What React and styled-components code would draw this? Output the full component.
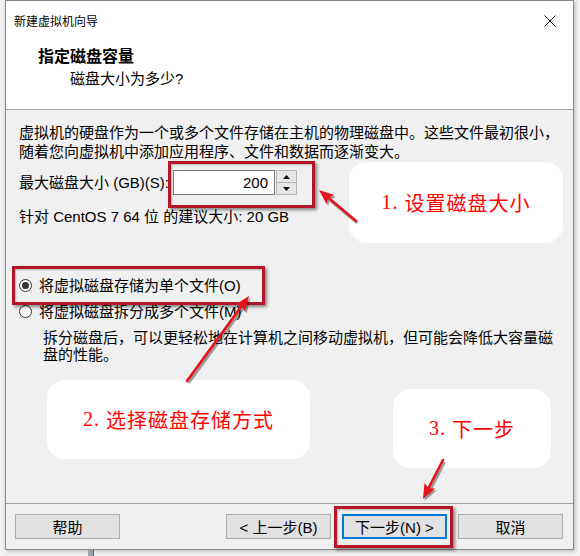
import React from 'react';
import styled, { createGlobalStyle } from 'styled-components';

const GlobalStyle = createGlobalStyle`
  html, body {
    margin: 0;
    padding: 0;
    background: #f2f2f2;
  }
`;

const UI_FONT = `"Liberation Sans", "Noto Sans CJK SC", sans-serif`;

export default function App() {
  return (
    <>
      <GlobalStyle />
      <Page>
        <Dialog>
          <TitleBar>
            <Title>新建虚拟机向导</Title>
            <CloseButton>
              <svg width="12" height="12" viewBox="0 0 12 12">
                <path d="M0.5 0.5 L11.5 11.5 M11.5 0.5 L0.5 11.5" stroke="#111" strokeWidth="1" fill="none" />
              </svg>
            </CloseButton>
          </TitleBar>

          <Header>
            <HeaderTitle>指定磁盘容量</HeaderTitle>
            <HeaderSub>磁盘大小为多少?</HeaderSub>
          </Header>

          <Body>
            <Paragraph>
              虚拟机的硬盘作为一个或多个文件存储在主机的物理磁盘中。这些文件最初很小，
              <br />
              随着您向虚拟机中添加应用程序、文件和数据而逐渐变大。
            </Paragraph>

            <SizeRow>
              <Label>最大磁盘大小 (GB)(S):</Label>
              <NumberBox>200</NumberBox>
              <Spinner>
                <SpinButton>
                  <svg width="7" height="4" viewBox="0 0 7 4"><path d="M3.5 0 L7 4 L0 4 Z" fill="#111" /></svg>
                </SpinButton>
                <SpinButton>
                  <svg width="7" height="4" viewBox="0 0 7 4"><path d="M0 0 L7 0 L3.5 4 Z" fill="#111" /></svg>
                </SpinButton>
              </Spinner>
            </SizeRow>

            <Hint>针对 CentOS 7 64 位 的建议大小: 20 GB</Hint>

            <RadioGroup>
              <RadioRow>
                <Radio $checked />
                <span>将虚拟磁盘存储为单个文件(O)</span>
              </RadioRow>
              <RadioRow>
                <Radio />
                <span>将虚拟磁盘拆分成多个文件(M)</span>
              </RadioRow>
              <RadioNote>
                拆分磁盘后，可以更轻松地在计算机之间移动虚拟机，但可能会降低大容量磁
                <br />
                盘的性能。
              </RadioNote>
            </RadioGroup>
          </Body>

          <Footer>
            <Button>帮助</Button>
            <FooterRight>
              <Button>&lt; 上一步(B)</Button>
              <Button $primary>下一步(N) &gt;</Button>
              <Button>取消</Button>
            </FooterRight>
          </Footer>
        </Dialog>

        <TaskbarBit />

        <Highlight $x={168} $y={161} $w={147} $h={47} />
        <Highlight $x={12} $y={266} $w={253} $h={39} />
        <Highlight $x={334} $y={506} $w={119} $h={42} />

        <Callout $x={349} $y={162} $w={214} $h={81}>
          <Step>1.</Step>设置磁盘大小
        </Callout>
        <Callout $x={47} $y={380} $w={263} $h={79}>
          <Step>2.</Step>选择磁盘存储方式
        </Callout>
        <Callout $x={393} $y={389} $w={158} $h={79}>
          <Step>3.</Step>下一步
        </Callout>

        <ArrowLayer width="580" height="556" viewBox="0 0 580 556">
          {ARROWS.map((a, i) => (
            <Arrow key={i} from={a.from} to={a.to} />
          ))}
        </ArrowLayer>
      </Page>
    </>
  );
}

const ARROWS = [
  { from: [356, 221], to: [319, 190] },
  { from: [187, 381], to: [249, 296] },
  { from: [443, 460], to: [423, 499] },
];

function Arrow({ from, to }) {
  const dx = to[0] - from[0];
  const dy = to[1] - from[1];
  const len = Math.hypot(dx, dy);
  const ux = dx / len;
  const uy = dy / len;
  const bx = to[0] - ux * 15;
  const by = to[1] - uy * 15;
  const nx = -uy;
  const ny = ux;
  const head = `${to[0]},${to[1]} ${bx + nx * 6},${by + ny * 6} ${bx + ux * 3},${by + uy * 3} ${bx - nx * 6},${by - ny * 6}`;
  return (
    <g>
      <g transform="translate(1.5 2)" opacity="0.35">
        <line x1={from[0]} y1={from[1]} x2={bx + ux * 4} y2={by + uy * 4} stroke="#000" strokeWidth="3" />
        <polygon points={head} fill="#000" />
      </g>
      <line x1={from[0]} y1={from[1]} x2={bx + ux * 4} y2={by + uy * 4} stroke="#e8121b" strokeWidth="2.6" strokeLinecap="round" />
      <polygon points={head} fill="#e8121b" />
    </g>
  );
}

const Page = styled.div`
  position: relative;
  width: 580px;
  height: 556px;
  overflow: hidden;
  background: #f2f2f2;
  font-family: ${UI_FONT};
`;

const Dialog = styled.div`
  margin-left: 5px;
  width: 567px;
  height: 548px;
  display: flex;
  flex-direction: column;
  background: #f0f0f0;
  border: 1px solid #8a8a8a;
  box-shadow: 1px 1px 4px rgba(0, 0, 0, 0.25);
`;

const TitleBar = styled.div`
  height: 39px;
  display: flex;
  align-items: center;
  justify-content: space-between;
  background: #fff;
  padding-left: 8px;
`;

const Title = styled.div`
  font-size: 12px;
  color: #000;
  font-family: "Noto Sans CJK SC", sans-serif;
`;

const CloseButton = styled.div`
  width: 40px;
  height: 32px;
  margin-right: 3px;
  display: flex;
  align-items: center;
  justify-content: center;
`;

const Header = styled.div`
  height: 70px;
  box-sizing: border-box;
  background: #fff;
  padding: 6px 0 0 32px;
  border-bottom: 1px solid #a0a0a0;
`;

const HeaderTitle = styled.div`
  font-size: 16px;
  font-weight: bold;
  line-height: 22px;
  color: #000;
`;

const HeaderSub = styled.div`
  font-size: 15px;
  line-height: 20px;
  margin-top: 1px;
  padding-left: 32px;
  color: #000;
`;

const Body = styled.div`
  flex: 1;
  padding: 13px 13px 0;
  font-size: 15px;
  color: #000;
`;

const Paragraph = styled.div`
  line-height: 19px;
  white-space: nowrap;
`;

const SizeRow = styled.div`
  display: flex;
  align-items: center;
  margin-top: 9px;
  height: 25px;
`;

const Label = styled.span`
  line-height: 19px;
  margin-right: 4px;
`;

const NumberBox = styled.div`
  width: 102px;
  height: 25px;
  box-sizing: border-box;
  border: 1px solid #7a7a7a;
  background: #fff;
  text-align: right;
  padding-right: 6px;
  line-height: 23px;
`;

const Spinner = styled.div`
  display: flex;
  flex-direction: column;
  width: 21px;
  height: 25px;
  margin-left: 1px;
`;

const SpinButton = styled.div`
  flex: 1;
  display: flex;
  align-items: center;
  justify-content: center;
  background: #e6e6e6;
  border: 1px solid #b4b4b4;
  & + & {
    border-top: none;
  }
`;

const Hint = styled.div`
  margin-top: 12px;
  line-height: 19px;
`;

const RadioGroup = styled.div`
  margin-top: 50px;
  display: flex;
  flex-direction: column;
  gap: 7px;
`;

const RadioRow = styled.div`
  display: flex;
  align-items: center;
  gap: 7px;
  line-height: 19px;
`;

const Radio = styled.span`
  width: 13px;
  height: 13px;
  box-sizing: border-box;
  border-radius: 50%;
  border: 1px solid #333;
  background: #fff;
  display: flex;
  align-items: center;
  justify-content: center;
  &::after {
    content: '';
    width: 7px;
    height: 7px;
    border-radius: 50%;
    background: ${(p) => (p.$checked ? '#333' : 'transparent')};
  }
`;

const RadioNote = styled.div`
  margin-top: 1px;
  padding-left: 24px;
  line-height: 17px;
  white-space: nowrap;
`;

const Footer = styled.div`
  height: 46px;
  box-sizing: border-box;
  border-top: 1px solid #a0a0a0;
  display: flex;
  align-items: flex-start;
  justify-content: space-between;
  padding: 10px 10px 0 9px;
`;

const FooterRight = styled.div`
  display: flex;
  gap: 11px;
`;

const Button = styled.div`
  width: 105px;
  height: 25px;
  box-sizing: border-box;
  display: flex;
  align-items: center;
  justify-content: center;
  background: #e1e1e1;
  border: ${(p) => (p.$primary ? '2px solid #0078d7' : '1px solid #adadad')};
  font-size: 15px;
  color: #000;
`;

const TaskbarBit = styled.div`
  position: absolute;
  left: 88px;
  top: 550px;
  width: 5px;
  height: 6px;
  background: #9aa4ae;
  border-right: 1px solid #4a6a8a;
`;

const Highlight = styled.div`
  position: absolute;
  left: ${(p) => p.$x}px;
  top: ${(p) => p.$y}px;
  width: ${(p) => p.$w}px;
  height: ${(p) => p.$h}px;
  box-sizing: border-box;
  border: 3px solid #b3162b;
  box-shadow: 2px 2px 3px rgba(0, 0, 0, 0.45), inset 1px 1px 2px rgba(0, 0, 0, 0.25);
`;

const Callout = styled.div`
  position: absolute;
  left: ${(p) => p.$x}px;
  top: ${(p) => p.$y}px;
  width: ${(p) => p.$w}px;
  height: ${(p) => p.$h}px;
  background: #fff;
  border-radius: 18px;
  display: flex;
  align-items: center;
  justify-content: center;
  color: #ff0000;
  font-family: "Noto Sans CJK SC", sans-serif;
  font-size: 20px;
  letter-spacing: 1px;
`;

const Step = styled.span`
  font-family: "Liberation Serif", serif;
  margin-right: 6px;
`;

const ArrowLayer = styled.svg`
  position: absolute;
  left: 0;
  top: 0;
  pointer-events: none;
`;
